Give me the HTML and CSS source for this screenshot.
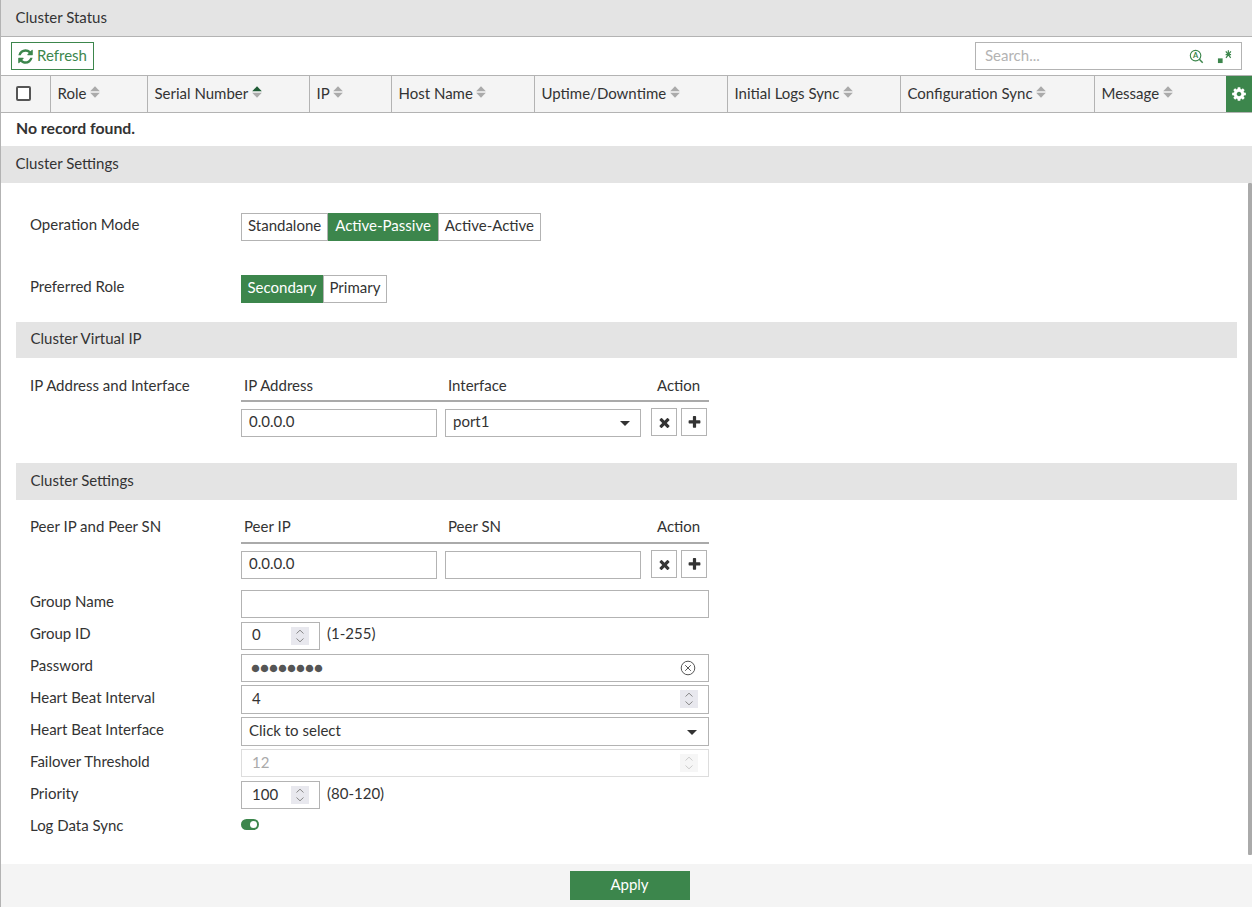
FILE: index.html
```html
<!DOCTYPE html>
<html lang="en">
<head>
<meta charset="utf-8">
<title>Cluster Status</title>
<link rel="stylesheet" href="styles.css">
</head>
<body>
<svg class="defs" width="0" height="0" aria-hidden="true">
  <symbol id="i-refresh" viewBox="0 0 1792 1792"><path d="M1639 1056q0 5-1 7-64 268-268 434.5t-478 166.5q-146 0-282.5-55t-243.5-157l-129 129q-19 19-45 19t-45-19-19-45v-448q0-26 19-45t45-19h448q26 0 45 19t19 45-19 45l-137 137q71 66 161 102t187 36q134 0 250-65t186-179q11-17 53-117 8-23 30-23h192q13 0 22.5 9.5t9.5 22.5zm25-800v448q0 26-19 45t-45 19h-448q-26 0-45-19t-19-45 19-45l138-138q-148-137-349-137-134 0-250 65t-186 179q-11 17-53 117-8 23-30 23h-199q-13 0-22.5-9.5t-9.5-22.5v-7q65-268 270-434.5t480-166.5q146 0 284 55.5t245 156.5l130-129q19-19 45-19t45 19 19 45z"/></symbol>
  <symbol id="i-cog" viewBox="0 0 1792 1792"><path d="M1152 896q0-106-75-181t-181-75-181 75-75 181 75 181 181 75 181-75 75-181zm512-109v222q0 12-8 23t-20 13l-185 28q-19 54-39 91 35 50 107 138 10 12 10 25t-9 23q-27 37-99 108t-94 71q-12 0-26-9l-138-108q-44 23-91 38-16 136-29 186-7 28-36 28h-222q-14 0-24.5-8.5t-11.5-21.5l-28-184q-49-16-90-37l-141 107q-10 9-25 9-14 0-25-11-126-114-165-168-7-10-7-23 0-12 8-23 15-21 51-66.5t54-70.5q-27-50-41-99l-183-27q-13-2-21-12.5t-8-23.5v-222q0-12 8-23t19-13l186-28q14-46 39-92-40-57-107-138-10-12-10-24 0-10 9-23 26-36 98.5-107.5t94.5-71.5q13 0 26 10l138 107q44-23 91-38 16-136 29-186 7-28 36-28h222q14 0 24.5 8.5t11.5 21.5l28 184q49 16 90 37l142-107q9-9 24-9 13 0 25 10 129 119 165 170 7 8 7 22 0 12-8 23-15 21-51 66.5t-54 70.5q26 50 41 98l183 28q13 2 21 12.5t8 23.5z"/></symbol>
  <symbol id="i-sort" viewBox="0 0 10 12"><path d="M5 0.3 9.8 5.3H0.2z"/><path d="M0.2 6.7H9.8L5 11.7z"/></symbol>
  <symbol id="i-sort-active" viewBox="0 0 10 12"><path fill="#1f5c36" d="M5 0.3 9.8 5.3H0.2z"/><path d="M0.2 6.7H9.8L5 11.7z"/></symbol>
  <symbol id="i-x" viewBox="0 0 1792 1792"><path d="M1490 1322q0 40-28 68l-136 136q-28 28-68 28t-68-28l-294-294-294 294q-28 28-68 28t-68-28l-136-136q-28-28-28-68t28-68l294-294-294-294q-28-28-28-68t28-68l136-136q28-28 68-28t68 28l294 294 294-294q28-28 68-28t68 28l136 136q28 28 28 68t-28 68l-294 294 294 294q28 28 28 68z"/></symbol>
  <symbol id="i-plus" viewBox="0 0 1792 1792"><path d="M1600 736v192q0 40-28 68t-68 28h-416v416q0 40-28 68t-68 28h-192q-40 0-68-28t-28-68v-416h-416q-40 0-68-28t-28-68v-192q0-40 28-68t68-28h416v-416q0-40 28-68t68-28h192q40 0 68 28t28 68v416h416q40 0 68 28t28 68z"/></symbol>
  <symbol id="i-spin" viewBox="0 0 18 18"><path d="M5.5 6.5 9 3.2 12.5 6.5M5.5 11.5 9 14.8 12.5 11.5" fill="none" stroke="currentColor" stroke-width="1"/></symbol>
</svg>

<div class="page">
  <header class="bar bar-top">Cluster Status</header>

  <div class="toolbar">
    <button class="refresh" type="button"><svg class="ic-refresh"><use href="#i-refresh"/></svg>Refresh</button>
    <div class="search">
      <span class="search-ph">Search...</span>
      <svg class="ic-search" viewBox="0 0 16 16"><circle cx="7" cy="7" r="5.6" fill="none" stroke="currentColor" stroke-width="1.2"/><path d="M11 11 14.6 14.6" stroke="currentColor" stroke-width="1.6"/><text x="7" y="9.6" class="search-a">A</text></svg>
      <svg class="ic-regex" viewBox="0 0 16 16"><rect x="1" y="10" width="5" height="5"/><path d="M9.2 6.1H15M12.1 1.2V6.1M12.1 6.1 9.4 2.6M12.1 6.1 14.8 2.6M12.1 6.1 9.6 9.4M12.1 6.1 14.6 9.4" fill="none" stroke="currentColor" stroke-width="1.3"/></svg>
    </div>
  </div>

  <div class="thead">
    <div class="th th-check"><span class="checkbox"></span></div>
    <div class="th"><span class="tx">Role</span><svg class="ic-sort"><use href="#i-sort"/></svg></div>
    <div class="th"><span class="tx">Serial Number</span><svg class="ic-sort"><use href="#i-sort-active"/></svg></div>
    <div class="th"><span class="tx">IP</span><svg class="ic-sort"><use href="#i-sort"/></svg></div>
    <div class="th"><span class="tx">Host Name</span><svg class="ic-sort"><use href="#i-sort"/></svg></div>
    <div class="th"><span class="tx">Uptime/Downtime</span><svg class="ic-sort"><use href="#i-sort"/></svg></div>
    <div class="th"><span class="tx">Initial Logs Sync</span><svg class="ic-sort"><use href="#i-sort"/></svg></div>
    <div class="th"><span class="tx">Configuration Sync</span><svg class="ic-sort"><use href="#i-sort"/></svg></div>
    <div class="th"><span class="tx">Message</span><svg class="ic-sort"><use href="#i-sort"/></svg></div>
    <div class="th-gear"><svg class="ic-cog"><use href="#i-cog"/></svg></div>
  </div>
  <div class="empty">No record found.</div>

  <div class="bar bar-settings">Cluster Settings</div>

  <main class="body">
    <div class="scrollbar"></div>

    <div class="row row-mode">
      <div class="label">Operation Mode</div>
      <div class="seg">
        <span class="seg-item">Standalone</span><span class="seg-item on">Active-Passive</span><span class="seg-item">Active-Active</span>
      </div>
    </div>
    <div class="row row-role">
      <div class="label">Preferred Role</div>
      <div class="seg">
        <span class="seg-item on">Secondary</span><span class="seg-item">Primary</span>
      </div>
    </div>

    <div class="bar sub-bar sub-vip">Cluster Virtual IP</div>
    <div class="row row-head">
      <div class="label">IP Address and Interface</div>
      <div class="mini">
        <div class="mini-head"><span class="mh-a">IP Address</span><span class="mh-b">Interface</span><span class="mh-c">Action</span></div>
        <div class="mini-row">
          <div class="field f-half"><span>0.0.0.0</span></div>
          <div class="field f-half"><span>port1</span><i class="caret"></i></div>
          <button class="act act-first" type="button"><svg><use href="#i-x"/></svg></button>
          <button class="act" type="button"><svg><use href="#i-plus"/></svg></button>
        </div>
      </div>
    </div>

    <div class="bar sub-bar sub-cs">Cluster Settings</div>
    <div class="row row-head row-peer">
      <div class="label">Peer IP and Peer SN</div>
      <div class="mini">
        <div class="mini-head"><span class="mh-a">Peer IP</span><span class="mh-b">Peer SN</span><span class="mh-c">Action</span></div>
        <div class="mini-row">
          <div class="field f-half"><span>0.0.0.0</span></div>
          <div class="field f-half"></div>
          <button class="act act-first" type="button"><svg><use href="#i-x"/></svg></button>
          <button class="act" type="button"><svg><use href="#i-plus"/></svg></button>
        </div>
      </div>
    </div>

    <div class="row row-group row-up">
      <div class="label">Group Name</div>
      <div class="field f-full"></div>
    </div>
    <div class="row row-gap4 row-up">
      <div class="label">Group ID</div>
      <div class="field f-num"><span>0</span><svg class="spin"><use href="#i-spin"/></svg></div>
      <span class="hint">(1-255)</span>
    </div>
    <div class="row row-gap4 row-up">
      <div class="label">Password</div>
      <div class="field f-full f-pass f-low"><span class="dots">●●●●●●●●</span>
        <svg class="ic-clear" viewBox="0 0 16 16"><circle cx="8" cy="8" r="6.8" fill="none" stroke="currentColor"/><path d="M5.2 5.2 10.8 10.8M10.8 5.2 5.2 10.8" stroke="currentColor"/></svg>
      </div>
    </div>
    <div class="row row-gap3">
      <div class="label">Heart Beat Interval</div>
      <div class="field f-full f-numtext f-tall"><span>4</span><svg class="spin"><use href="#i-spin"/></svg></div>
    </div>
    <div class="row row-gap3">
      <div class="label">Heart Beat Interface</div>
      <div class="field f-full f-tall"><span>Click to select</span><i class="caret"></i></div>
    </div>
    <div class="row row-gap3">
      <div class="label">Failover Threshold</div>
      <div class="field f-full f-numtext f-disabled f-low"><span>12</span><svg class="spin"><use href="#i-spin"/></svg></div>
    </div>
    <div class="row row-gap4">
      <div class="label">Priority</div>
      <div class="field f-num f-low"><span>100</span><svg class="spin"><use href="#i-spin"/></svg></div>
      <span class="hint">(80-120)</span>
    </div>
    <div class="row row-gap4">
      <div class="label">Log Data Sync</div>
      <span class="toggle"></span>
    </div>
  </main>

  <footer class="footer"><button class="apply" type="button">Apply</button></footer>
</div>
</body>
</html>
```

FILE: styles.css
```css
* { box-sizing: border-box; }
html, body { margin: 0; padding: 0; height: 100%; }
body {
  font-family: "Lato", "Liberation Sans", sans-serif;
  font-size: 15px;
  line-height: 20px;
  color: #333;
  background: #fff;
  overflow: hidden;
  font-variant-ligatures: common-ligatures;
}
.defs { position: absolute; }
button { font: inherit; padding: 0; cursor: pointer; }
svg { display: block; fill: currentColor; }

.page {
  height: 907px;
  width: 1252px;
  border-left: 1px solid #b3b3b3;
  display: flex;
  flex-direction: column;
}

.bar {
  display: flex;
  align-items: center;
  background: #e4e4e4;
  padding: 0 0 4px 14.5px;
  flex: none;
}
.bar-top { height: 37px; padding-bottom: 2px; border-bottom: 1px solid #b3b3b3; }
.bar-settings { height: 37px; }

.toolbar {
  height: 38px;
  flex: none;
  display: flex;
  align-items: flex-start;
  justify-content: space-between;
  padding: 5px 10px 0 10px;
}
.refresh {
  display: flex;
  align-items: center;
  width: 83px;
  height: 28px;
  background: #fff;
  border: 1px solid #3c864c;
  color: #3c864c;
  padding: 0 0 3px 5px;
}
.ic-refresh { width: 17px; height: 17px; margin-right: 3px; margin-top: 3px; }
.search {
  position: relative;
  width: 267px;
  height: 28px;
  border: 1px solid #b3b3b3;
  display: flex;
  align-items: center;
  padding-left: 9px;
  color: #b3b3b3;
}
.search-ph { flex: 1; margin-top: -3px; }
.ic-search { width: 15px; height: 15px; color: #3c864c; margin-right: 13px; margin-top: 1px; }
.search-a { font-size: 8px; font-weight: 700; text-anchor: middle; fill: currentColor; }
.ic-regex { width: 15px; height: 15px; color: #3c864c; margin-right: 9px; }

.thead {
  height: 38px;
  flex: none;
  display: grid;
  grid-template-columns: 50px 97px 162px 82px 143px 193px 173px 194px 131px 26px;
  background: #f4f4f4;
  border-top: 1px solid #b3b3b3;
  border-bottom: 1px solid #b3b3b3;
}
.th {
  display: flex;
  align-items: center;
  padding-left: 6.5px;
  border-right: 1px solid #b3b3b3;
}
.th:nth-child(9) { border-right: 0; }
.th.th-check { padding-left: 15px; }
.tx { margin-top: -3px; }
.checkbox {
  width: 15px;
  height: 15px;
  margin-top: -1px;
  border: 2px solid #555;
  border-radius: 2px;
  background: #fff;
}
.ic-sort { width: 10px; height: 12px; margin: -4px 0 0 3.5px; color: #aaa; }
.th-gear {
  background: #3c864c;
  color: #fff;
  display: flex;
  align-items: center;
  justify-content: center;
}
.ic-cog { width: 16px; height: 16px; }

.empty {
  height: 33px;
  flex: none;
  display: flex;
  align-items: center;
  padding: 0 0 3px 15px;
  font-weight: 700;
  font-size: 15.8px;
}

.body {
  position: relative;
  flex: 1;
  padding: 30px 0 0 15px;
}
.scrollbar {
  position: absolute;
  top: 0;
  right: 0;
  width: 4px;
  height: 672px;
  background: #aaa;
  border-radius: 1px;
}

.row { display: flex; align-items: flex-start; padding-left: 14px; }
.label { width: 211px; flex: none; line-height: 24px; }

.row-role { margin-top: 34px; }
.row-head .label { margin-top: 1px; }
.row-peer .label { margin-top: 0; }
.row-group { margin-top: 11px; }
.row-gap4 { margin-top: 4px; }
.row-gap3 { margin-top: 3px; }
.row-up .label, .row-up .hint { margin-top: -1px; }
.row-mode .label, .row-role .label { line-height: 22px; }

.seg { display: flex; }
.seg-item {
  height: 28px;
  display: flex;
  align-items: center;
  padding: 0 6px 4px;
  border: 1px solid #b3b3b3;
  background: #fff;
}
.row-role .seg-item { padding: 0 5.5px 4px; }
.seg-item.on { background: #3c864c; border-color: #3c864c; color: #fff; }

.sub-bar { width: 1221px; }
.sub-vip { height: 36px; margin-top: 19px; margin-bottom: 14px; }
.sub-cs { height: 37px; margin-top: 26px; margin-bottom: 14px; }

.mini { width: 468px; }
.mini-head {
  height: 30px;
  display: flex;
  align-items: center;
  border-bottom: 2px solid #aaa;
  padding: 0 0 2px 3px;
}
.row-peer .mini-head { padding-bottom: 4px; }
.mh-a { width: 204px; }
.mh-b { width: 209px; }
.mini-row { display: flex; margin-top: 7px; align-items: flex-start; }
.mini-row .f-half + .f-half { margin-left: 8px; }

.field {
  position: relative;
  height: 28px;
  border: 1px solid #b3b3b3;
  background: #fff;
  display: flex;
  align-items: center;
  padding: 0 0 4px 7px;
}
.f-half { width: 196px; }
.f-full { width: 468px; }
.f-tall { height: 29px; }
.f-num { width: 79px; padding-left: 10px; }
.f-numtext { padding-left: 10px; }
.f-pass { padding-left: 9px; }
.f-low { padding-bottom: 2px; }
.dots { color: #555; }
.f-disabled { border-color: #ddd; color: #aaa; }
.f-disabled .spin { background: #f6f6f6; color: #ccc; }

.caret {
  position: absolute;
  right: 10px;
  top: 50%;
  margin-top: -2px;
  border-left: 5px solid transparent;
  border-right: 5px solid transparent;
  border-top: 5px solid #333;
}
.f-full .caret { right: 11px; }
.spin {
  position: absolute;
  right: 10px;
  top: 4px;
  width: 18px;
  height: 18px;
  background: #e8e8ee;
  color: #888;
}
.ic-clear {
  position: absolute;
  right: 12px;
  top: 5px;
  width: 16px;
  height: 16px;
  color: #555;
}
.hint { margin-left: 7px; line-height: 24px; }

.act {
  width: 26px;
  height: 28px;
  background: #fff;
  border: 1px solid #b3b3b3;
  color: #333;
  display: flex;
  align-items: center;
  justify-content: center;
  margin-top: -1px;
  margin-left: 4px;
}
.act-first { margin-left: 10px; }
.act svg { width: 15px; height: 15px; }

.toggle {
  position: relative;
  display: block;
  width: 18px;
  height: 11px;
  margin-top: 6px;
  border-radius: 6px;
  background: #3c864c;
}
.toggle::after {
  content: "";
  position: absolute;
  right: 2px;
  top: 2px;
  width: 7px;
  height: 7px;
  border-radius: 50%;
  background: #fff;
}

.footer {
  height: 43px;
  flex: none;
  background: #f4f4f4;
  display: flex;
  justify-content: center;
  align-items: flex-start;
}
.apply {
  width: 120px;
  height: 29px;
  margin-top: 7px;
  margin-left: 6px;
  padding-bottom: 4px;
  border: 0;
  background: #3c864c;
  color: #fff;
}
```
